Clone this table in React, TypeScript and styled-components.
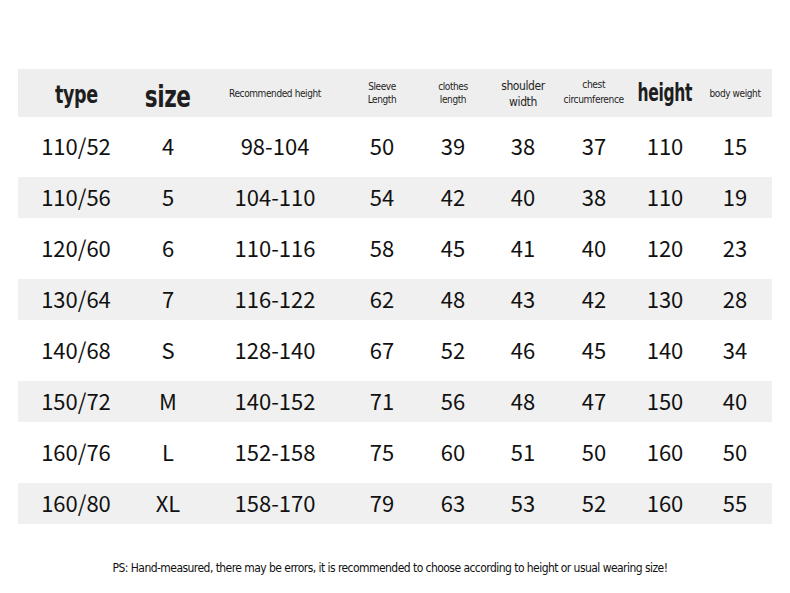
import styled, { createGlobalStyle } from "styled-components";

const GlobalStyle = createGlobalStyle`
  html, body {
    margin: 0;
    padding: 0;
    background: #ffffff;
  }
`;

const COLUMNS = "116px 68px 146px 68px 74px 66px 76px 66px 1fr";
const CONDENSED = `"DejaVu Sans Condensed", "DejaVu Sans", sans-serif`;

const Page = styled.div`
  width: 790px;
  height: 593px;
  box-sizing: border-box;
  padding: 69px 18px 0 18px;
  background: #fff;
`;

const Table = styled.div`
  display: flex;
  flex-direction: column;
`;

const HeaderRow = styled.div`
  display: grid;
  grid-template-columns: ${COLUMNS};
  height: 48px;
  background: #eeeeee;
  margin-bottom: 4px;
`;

const HeadCell = styled.div<{ $shift?: number }>`
  display: flex;
  align-items: center;
  justify-content: center;
  text-align: center;
  white-space: nowrap;
  padding-top: ${(p) => p.$shift ?? 0}px;
`;

const Label = styled.span<{ $size: number; $bold?: boolean; $squeeze?: number }>`
  display: inline-block;
  font-family: ${CONDENSED};
  font-stretch: condensed;
  font-size: ${(p) => p.$size}px;
  font-weight: ${(p) => (p.$bold ? 700 : 400)};
  letter-spacing: ${(p) => (p.$bold ? "-0.5px" : "-0.4px")};
  line-height: 1.35;
  color: #1e1e1e;
  transform: scaleX(${(p) => p.$squeeze ?? 1});
`;

const RowWrap = styled.div`
  height: 51px;
  box-sizing: border-box;
  padding: 5px 0;
`;

const Row = styled.div<{ $shaded: boolean }>`
  display: grid;
  grid-template-columns: ${COLUMNS};
  height: 41px;
  align-items: center;
  background: ${(p) => (p.$shaded ? "#f0f0f0" : "transparent")};
`;

const Cell = styled.div`
  text-align: center;
  font-family: "Noto Sans CJK SC", "Noto Sans", sans-serif;
  font-size: 22px;
  color: #111;
  line-height: 1;
  padding-bottom: 3px;
`;

const Note = styled.div`
  margin-top: 32px;
  padding-right: 10px;
  text-align: center;
  font-family: ${CONDENSED};
  font-stretch: condensed;
  font-size: 12px;
  letter-spacing: -0.55px;
  color: #111;
`;

const rows = [
  ["110/52", "4", "98-104", "50", "39", "38", "37", "110", "15"],
  ["110/56", "5", "104-110", "54", "42", "40", "38", "110", "19"],
  ["120/60", "6", "110-116", "58", "45", "41", "40", "120", "23"],
  ["130/64", "7", "116-122", "62", "48", "43", "42", "130", "28"],
  ["140/68", "S", "128-140", "67", "52", "46", "45", "140", "34"],
  ["150/72", "M", "140-152", "71", "56", "48", "47", "150", "40"],
  ["160/76", "L", "152-158", "75", "60", "51", "50", "160", "50"],
  ["160/80", "XL", "158-170", "79", "63", "53", "52", "160", "55"],
];

export default function App() {
  return (
    <Page>
      <GlobalStyle />
      <Table>
        <HeaderRow>
          <HeadCell $shift={4}>
            <Label $size={25} $bold $squeeze={0.78}>type</Label>
          </HeadCell>
          <HeadCell $shift={8}>
            <Label $size={30} $bold $squeeze={0.8}>size</Label>
          </HeadCell>
          <HeadCell>
            <Label $size={10}>Recommended height</Label>
          </HeadCell>
          <HeadCell>
            <Label $size={10}>
              Sleeve
              <br />
              Length
            </Label>
          </HeadCell>
          <HeadCell>
            <Label $size={10}>
              clothes
              <br />
              length
            </Label>
          </HeadCell>
          <HeadCell $shift={2}>
            <Label $size={12}>
              shoulder
              <br />
              width
            </Label>
          </HeadCell>
          <HeadCell>
            <Label $size={11} $squeeze={0.92}>
              chest
              <br />
              circumference
            </Label>
          </HeadCell>
          <HeadCell>
            <Label $size={24} $bold $squeeze={0.72}>height</Label>
          </HeadCell>
          <HeadCell>
            <Label $size={10}>body weight</Label>
          </HeadCell>
        </HeaderRow>
        {rows.map((r, i) => (
          <RowWrap key={r[0] + i}>
            <Row $shaded={i % 2 === 1}>
              {r.map((v, j) => (
                <Cell key={j}>{v}</Cell>
              ))}
            </Row>
          </RowWrap>
        ))}
      </Table>
      <Note>
        PS: Hand-measured, there may be errors, it is recommended to choose according to height or usual wearing size!
      </Note>
    </Page>
  );
}
